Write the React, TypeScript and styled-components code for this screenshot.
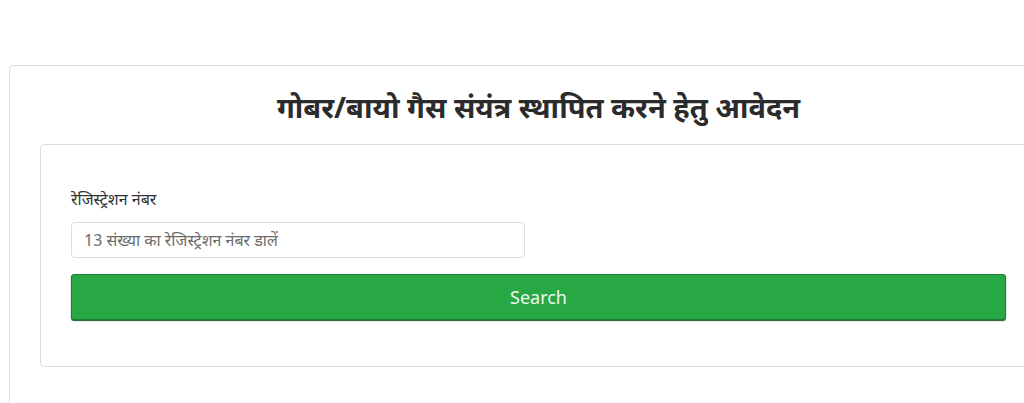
import React from 'react'
import styled, { createGlobalStyle } from 'styled-components'

const GlobalStyle = createGlobalStyle`
  body {
    margin: 0;
    background: #fff;
    font-family: "Noto Sans", "Open Sans", sans-serif;
    color: #212529;
  }
`

const Page = styled.div`
  padding: 65px 0 0 9px;
  width: 1059px;
`

const Card = styled.div`
  border: 1px solid #dcdcdc;
  border-radius: 5px;
  padding: 22px 30px 60px;
`

const Title = styled.h2`
  margin: 0 0 18px;
  text-align: center;
  font-size: 29px;
  font-weight: 700;
  color: #2b2b2b;
  line-height: 1.3;
`

const InnerCard = styled.div`
  border: 1px solid #dcdcdc;
  border-radius: 4px;
  padding: 44px 30px 46px;
`

const Label = styled.label`
  display: block;
  font-size: 16px;
  color: #333;
  margin-bottom: 13px;
  line-height: 1.3;
`

const Input = styled.input`
  display: block;
  box-sizing: border-box;
  width: 454px;
  height: 36px;
  padding: 4px 12px;
  border: 1px solid #dedede;
  border-radius: 4px;
  font-family: inherit;
  font-size: 16px;
  color: #495057;
  margin-bottom: 16px;
  &::placeholder {
    color: #6c6c6c;
  }
`

const Button = styled.button`
  display: block;
  width: 100%;
  height: 46px;
  border: 1px solid #1e7b34;
  border-radius: 3px;
  background: #28a745;
  box-shadow: 0 1px 1px #1c5a2a;
  color: #eef8ef;
  font-family: inherit;
  font-size: 18px;
  cursor: pointer;
`

export default function App() {
  return (
    <>
      <GlobalStyle />
      <Page>
        <Card>
          <Title>गोबर/बायो गैस संयंत्र स्थापित करने हेतु आवेदन</Title>
          <InnerCard>
            <Label htmlFor="reg">रेजिस्ट्रेशन नंबर</Label>
            <Input id="reg" placeholder="13 संख्या का रेजिस्ट्रेशन नंबर डालें" />
            <Button type="button">Search</Button>
          </InnerCard>
        </Card>
      </Page>
    </>
  )
}
